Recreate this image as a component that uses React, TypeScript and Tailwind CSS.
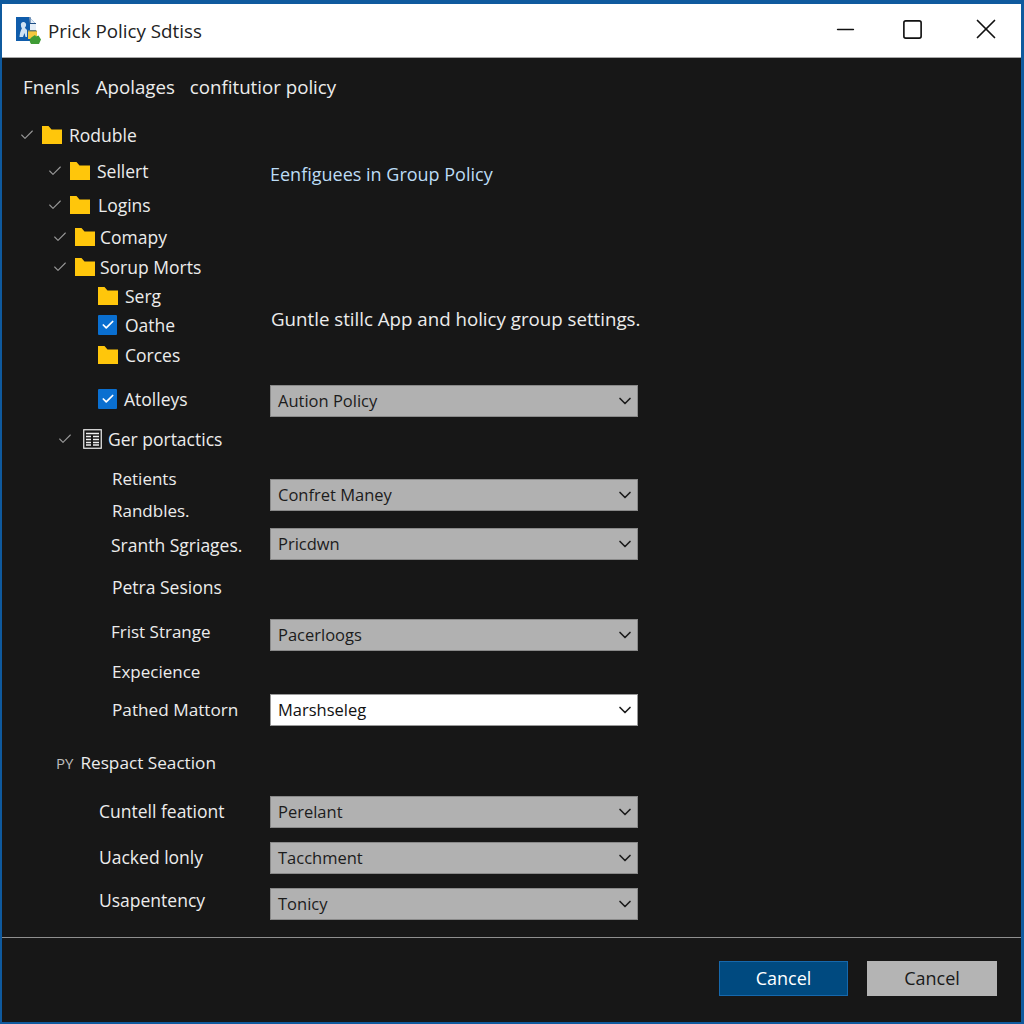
import React from "react";
import { Check, ChevronDown, Minus, Square, X } from "lucide-react";

const FolderIcon = () => (
  <svg width="20" height="18" viewBox="0 0 20 18" className="shrink-0">
    <path d="M0 0h6.5l3 3.5H20V18H0z" fill="#ffc60b" />
  </svg>
);

const CheckIcon = () => (
  <span className="flex h-[20px] w-[19px] shrink-0 items-center justify-center rounded-[1px] bg-[#0a6fd0]">
    <Check size={14} strokeWidth={3} className="text-white" />
  </span>
);

const ReportIcon = () => (
  <svg width="19" height="20" viewBox="0 0 19 20" className="ml-[3px] shrink-0" fill="none" stroke="#f0f0f0">
    <rect x="0.75" y="0.75" width="17.5" height="18.5" strokeWidth="1.2" />
    <path d="M3 4.5h13M3 7.5h5M10 7.5h6M3 10.5h5M10 10.5h6M3 13.5h5M10 13.5h6M3 16h5M10 16h6" strokeWidth="1.4" />
  </svg>
);

const AppIcon = () => (
  <svg width="26" height="28" viewBox="0 0 26 28" className="shrink-0">
    <path d="M0 0h13l7 7v17H0z" fill="#0f5cab" />
    <path d="M13 0l7 7v6h-6V7z" fill="#e4eef8" />
    <path d="M14 0v6.5h6" fill="none" stroke="#1f4f86" />
    <path d="M7.5 5a2.6 2.6 0 0 1 2.6 3c0 1.2-.6 2.2-1.3 2.8l2.2 2.2v7H9.5l-1-4-1.5 4H3.5c.3-3 .8-6 2.4-8.8C5.200 10.500 5 9.500 5 8.500A2.600 2.600 0 0 1 7.500 5z" fill="#cfe2f3" />
    <path d="M12 14h9v8h-9z" fill="#f4c83e" />
    <path d="M12 13.500h9v1.500h-9z" fill="#b9a24a" />
    <path d="M15 27a4.500 4.500 0 0 1 1-7l3-2 1 1.500 2.500-1 2.500 4-2 4.500z" fill="#3f9c35" />
  </svg>
);

type TreeRow = {
  label: string;
  className: string;
  chevron?: boolean;
  prefix?: string;
  icon?: React.ReactNode;
  labelClass?: string;
};

const treeRows: TreeRow[] = [
  { label: "Roduble", className: "pl-[17px] text-[17.500px]", chevron: true, icon: <FolderIcon />, labelClass: "ml-[7px]" },
  { label: "Sellert", className: "mt-[8px] pl-[45px] text-[17.500px]", chevron: true, icon: <FolderIcon />, labelClass: "ml-[7px]" },
  { label: "Logins", className: "mt-[6px] pl-[45px] text-[17.500px]", chevron: true, icon: <FolderIcon />, labelClass: "ml-[8px]" },
  { label: "Comapy", className: "mt-[4px] pl-[50px] text-[17.500px]", chevron: true, icon: <FolderIcon />, labelClass: "ml-[5px]" },
  { label: "Sorup Morts", className: "mt-[2px] pl-[50px] text-[17.500px]", chevron: true, icon: <FolderIcon />, labelClass: "ml-[5px]" },
  { label: "Serg", className: "mt-[1px] pl-[96px] text-[17.500px]", icon: <FolderIcon />, labelClass: "ml-[7px]" },
  { label: "Oathe", className: "mt-[1px] pl-[96px] text-[17.500px]", icon: <CheckIcon />, labelClass: "ml-[8px]" },
  { label: "Corces", className: "mt-[2px] pl-[96px] text-[17.500px]", icon: <FolderIcon />, labelClass: "ml-[7px]" },
  { label: "Atolleys", className: "mt-[16px] pl-[96px] text-[17.500px]", icon: <CheckIcon />, labelClass: "ml-[7px]" },
  { label: "Ger portactics", className: "mt-[12px] pl-[55px] text-[17.500px]", chevron: true, icon: <ReportIcon />, labelClass: "ml-[6px]" },
  { label: "Retients", className: "mt-[12px] pl-[110px] text-[17px]" },
  { label: "Randbles.", className: "mt-[4px] pl-[110px] text-[17px]" },
  { label: "Sranth Sgriages.", className: "mt-[6px] pl-[109px] text-[17.500px]" },
  { label: "Petra Sesions", className: "mt-[14px] pl-[110px] text-[17.500px]" },
  { label: "Frist Strange", className: "mt-[17px] pl-[109px] text-[17px]" },
  { label: "Expecience", className: "mt-[12px] pl-[110px] text-[17px]" },
  { label: "Pathed Mattorn", className: "mt-[10px] pl-[110px] text-[17.200px]" },
  { label: "Respact Seaction", className: "mt-[25px] pl-[54px] text-[17.200px]", prefix: "PY", labelClass: "ml-[7px]" },
  { label: "Cuntell feationt", className: "mt-[20px] pl-[97px] text-[17.500px]" },
  { label: "Uacked lonly", className: "mt-[18px] pl-[97px] text-[17.500px]" },
  { label: "Usapentency", className: "mt-[15px] pl-[97px] text-[17.500px]" },
];

const Dropdown = ({ value, className, active }: { value: string; className: string; active?: boolean }) => (
  <div
    className={`${className} flex h-[32px] w-[368px] items-center justify-between border pl-[7px] pr-[2px] text-[16.500px] ${
      active ? "border-[#9a9a9a] bg-white text-[#111]" : "border-[#8a8a8a] bg-[#b1b1b1] text-[#1c1c1c]"
    }`}
  >
    <span>{value}</span>
    <ChevronDown size={20} strokeWidth={2} className="text-[#1c1c1c]" />
  </div>
);

export default function App() {
  return (
    <div
      className="flex h-[1024px] w-[1024px] flex-col overflow-hidden border-b-2 border-l-2 border-r-[3px] border-t-[4px] border-b-[#0f5a9e] border-l-[#0f5a9e] border-r-[#0f5a9e] border-t-[#0f5a9e] bg-[#171717] text-[#ececec]"
      style={{ fontFamily: '"Open Sans", "Noto Sans", sans-serif' }}
    >
      {/* title bar */}
      <div className="flex h-[54px] shrink-0 items-center border-b border-[#a8a8a8] bg-white pl-[14px] text-[#222]">
        <AppIcon />
        <span className="ml-[6px] mt-[1px] text-[18.800px]">Prick Policy Sdtiss</span>
        <div className="ml-auto flex items-center pb-[3px]">
          <Minus size={27} strokeWidth={1.4} className="mr-[42px] text-[#111]" />
          <Square size={23} strokeWidth={1.7} className="mr-[45px] text-[#111]" />
          <X size={34} strokeWidth={1.2} className="mr-[18px] text-[#111]" />
        </div>
      </div>

      {/* menu */}
      <div className="flex h-[58px] shrink-0 items-center pl-[21px] text-[18.700px]">
        <span>Fnenls</span>
        <span className="ml-[16px]">Apolages</span>
        <span className="ml-[15px]">confitutior policy</span>
      </div>

      {/* body */}
      <div className="flex flex-1">
        <div className="w-[268px] shrink-0 pt-[5px]">
          {treeRows.map((row) => (
            <div key={row.label} className={`flex h-[28px] items-center whitespace-nowrap ${row.className}`}>
              {row.chevron && <Check size={16} strokeWidth={1.6} className="mr-[7px] shrink-0 text-[#999]" />}
              {row.prefix && <span className="text-[15px] text-[#bdbdbd]">{row.prefix}</span>}
              {row.icon}
              <span className={row.labelClass}>{row.label}</span>
            </div>
          ))}
        </div>

        <div className="flex flex-col">
          <div className="mt-[44px] text-[18px] leading-[28px] text-[#bcdcf5]">Eenfiguees in Group Policy</div>
          <div className="mt-[117px] whitespace-nowrap pl-[1px] text-[18.700px] leading-[28px]">
            Guntle stillc App and holicy group settings.
          </div>
          <Dropdown value="Aution Policy" className="mt-[52px]" />
          <Dropdown value="Confret Maney" className="mt-[62px]" />
          <Dropdown value="Pricdwn" className="mt-[17px]" />
          <Dropdown value="Pacerloogs" className="mt-[59px]" />
          <Dropdown value="Marshseleg" className="mt-[43px]" active />
          <Dropdown value="Perelant" className="mt-[70px]" />
          <Dropdown value="Tacchment" className="mt-[14px]" />
          <Dropdown value="Tonicy" className="mt-[14px]" />
        </div>
      </div>

      {/* footer */}
      <div className="flex h-[85px] shrink-0 items-start justify-end border-t border-[#8f8f8f] pr-[24px] pt-[23px]">
        <button className="h-[35px] w-[129px] border border-[#1668ac] bg-[#004a80] text-[18px] text-white">Cancel</button>
        <button className="ml-[19px] h-[35px] w-[130px] bg-[#b4b4b4] text-[18px] text-[#1a1a1a]">Cancel</button>
      </div>
    </div>
  );
}
